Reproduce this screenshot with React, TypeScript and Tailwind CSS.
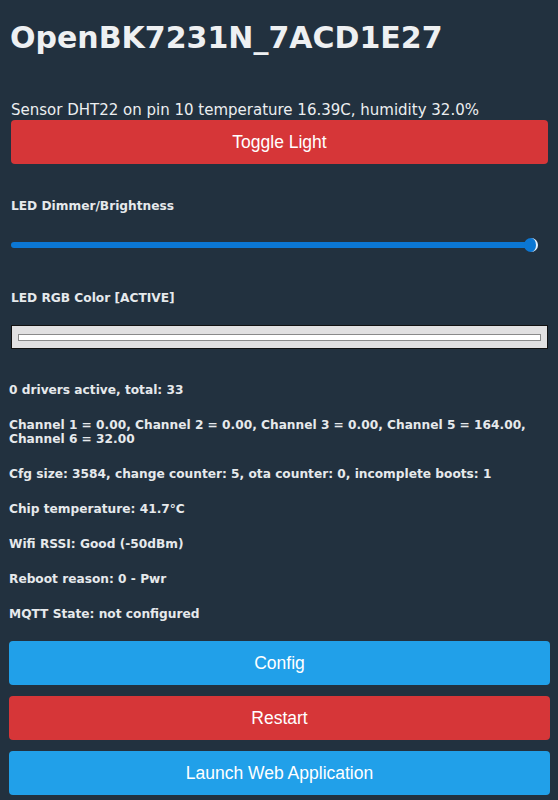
import React from "react";

const verdana = { fontFamily: '"DejaVu Sans", Verdana, sans-serif' };

function Info({ children }: { children: React.ReactNode }) {
  return (
    <div className="font-bold text-[12.2px] leading-[14px] text-[#e6e9ec]" style={verdana}>
      {children}
    </div>
  );
}

function Btn({ label, color }: { label: string; color: string }) {
  return (
    <div
      className={`h-[44px] rounded-[4px] flex items-center justify-center text-white text-[17.5px] ${color}`}
      style={{ fontFamily: '"Liberation Sans", Arial, sans-serif' }}
    >
      {label}
    </div>
  );
}

export default function App() {
  return (
    <div className="w-[558px] h-[800px] bg-[#22313f] overflow-hidden text-[#e8eaed]" style={verdana}>
      <div className="pl-[10px] pt-[18px]">
        <h1 className="text-[30px] font-bold leading-[40px] text-[#eef0f2]">OpenBK7231N_7ACD1E27</h1>
      </div>
      <div className="pl-[11px] pr-[10px] mt-[43px]">
        <div className="text-[15px] leading-[18px] text-[#eceef0]">
          Sensor DHT22 on pin 10 temperature 16.39C, humidity 32.0%
        </div>
        <div className="mt-[1px]">
          <Btn label="Toggle Light" color="bg-[#d63638]" />
        </div>
        <div className="mt-[35px] font-bold text-[12.2px] leading-[14px] text-[#e6e9ec]">LED Dimmer/Brightness</div>
        <div className="mt-[25px] relative h-[14px] flex items-center pr-[10px]">
          <div className="h-[6px] w-full rounded-full bg-[#0b77d4]" />
          <div className="absolute right-[10px] top-0 w-[14px] h-[14px] rounded-full bg-[#0b77d4] border-r-[2px] border-r-[#e6f0fa]" />
        </div>
        <div className="mt-[39px] font-bold text-[12.2px] leading-[14px] text-[#e6e9ec]">LED RGB Color [ACTIVE]</div>
        <div className="mt-[20px] h-[24px] bg-[#e1e0e1] border border-[#111] flex items-center px-[6px]">
          <div className="w-full h-[7px] bg-white border border-[#8a8a8a]" />
        </div>
      </div>
      <div className="pl-[9px] pr-[10px] mt-[34px] flex flex-col gap-[21px]">
        <Info>0 drivers active, total: 33</Info>
        <Info>
          Channel 1 = 0.00, Channel 2 = 0.00, Channel 3 = 0.00, Channel 5 = 164.00,
          <br />
          Channel 6 = 32.00
        </Info>
        <Info>Cfg size: 3584, change counter: 5, ota counter: 0, incomplete boots: 1</Info>
        <Info>Chip temperature: 41.7°C</Info>
        <Info>Wifi RSSI: Good (-50dBm)</Info>
        <Info>Reboot reason: 0 - Pwr</Info>
        <Info>MQTT State: not configured</Info>
      </div>
      <div className="pl-[9px] pr-[8px] mt-[20px] flex flex-col gap-[11px]">
        <Btn label="Config" color="bg-[#21a0e9]" />
        <Btn label="Restart" color="bg-[#d63638]" />
        <Btn label="Launch Web Application" color="bg-[#21a0e9]" />
      </div>
    </div>
  );
}
